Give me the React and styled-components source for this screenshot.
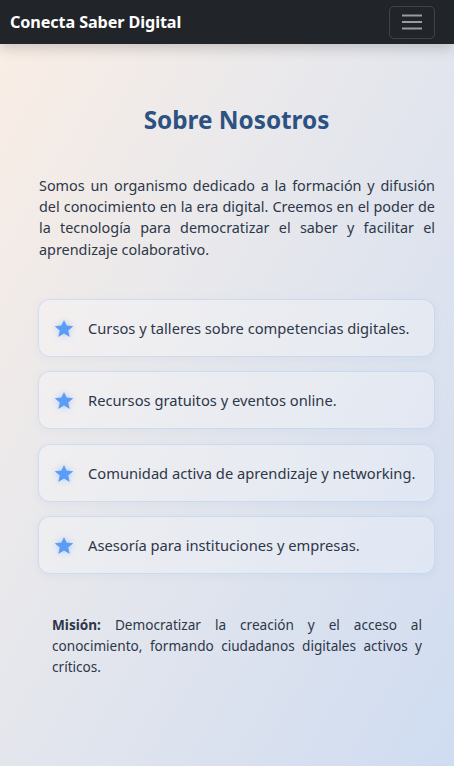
import React from "react";
import styled, { createGlobalStyle } from "styled-components";

const Global = createGlobalStyle`
  html, body {
    margin: 0;
    padding: 0;
  }
  body {
    font-family: "Noto Sans", "Open Sans", sans-serif;
    background: linear-gradient(120deg, #fbeee4 0%, #e8e8ec 40%, #cfdcf1 100%);
    min-height: 766px;
  }
`;

const Page = styled.div`
  min-height: 766px;
  display: flex;
  flex-direction: column;
`;

const Navbar = styled.nav`
  height: 44px;
  background: #212529;
  display: flex;
  align-items: center;
  justify-content: space-between;
  padding: 0 19px 0 10px;
  box-shadow: 0 4px 14px rgba(0, 0, 0, 0.18);
  position: relative;
  z-index: 2;
`;

const Brand = styled.span`
  color: #fff;
  font-weight: 700;
  font-size: 16.2px;
  letter-spacing: -0.1px;
`;

const Toggler = styled.button`
  width: 46px;
  height: 33px;
  border: 1px solid rgba(255, 255, 255, 0.14);
  border-radius: 5px;
  background: transparent;
  display: flex;
  align-items: center;
  justify-content: center;
  padding: 0;
`;

const Main = styled.main`
  padding: 62px 19px 40px 38px;
  display: flex;
  flex-direction: column;
`;

const Title = styled.h2`
  margin: 0;
  text-align: center;
  color: #2c5282;
  font-size: 24.3px;
  font-weight: 700;
  line-height: 28px;
`;

const Intro = styled.p`
  margin: 41px 0 0 1px;
  font-size: 14.4px;
  line-height: 21.2px;
  color: #2d3748;
  text-align: justify;
`;

const List = styled.ul`
  list-style: none;
  margin: 39px 0 0;
  padding: 0;
  display: flex;
  flex-direction: column;
  gap: 14.5px;
`;

const Item = styled.li`
  height: 56px;
  border: 1px solid rgba(147, 187, 245, 0.35);
  border-radius: 12px;
  background: rgba(255, 255, 255, 0.25);
  box-shadow: 0 2px 8px rgba(120, 140, 180, 0.08);
  display: flex;
  align-items: center;
  gap: 12px;
  padding: 0 13px;
  font-size: 14.7px;
  color: #2d3748;
`;

const Mission = styled.p`
  margin: 40px 13px 0 14px;
  font-size: 13.6px;
  line-height: 21px;
  color: #2d3748;
  text-align: justify;
  b {
    font-weight: 700;
  }
`;

const Star = () => (
  <svg width="24" height="22" viewBox="0 0 24 22" style={{ filter: "drop-shadow(0 0 3px rgba(96,165,250,0.45))", flexShrink: 0 }}>
    <path
      d="M12 3l2.6 5.6 6.7.6-5.1 4.3 1.6 6.5L12 16.6 6.2 20l1.6-6.5-5.1-4.3 6.7-.6z"
      fill="#5b9cf7"
    />
  </svg>
);

const Burger = () => (
  <svg width="24" height="18" viewBox="0 0 24 18">
    <g stroke="rgba(255,255,255,0.55)" strokeWidth="2">
      <line x1="2" y1="2.5" x2="22" y2="2.5" />
      <line x1="2" y1="9" x2="22" y2="9" />
      <line x1="2" y1="15.5" x2="22" y2="15.5" />
    </g>
  </svg>
);

const items = [
  "Cursos y talleres sobre competencias digitales.",
  "Recursos gratuitos y eventos online.",
  "Comunidad activa de aprendizaje y networking.",
  "Asesoría para instituciones y empresas.",
];

export default function App() {
  return (
    <Page>
      <Global />
      <Navbar>
        <Brand>Conecta Saber Digital</Brand>
        <Toggler aria-label="menu">
          <Burger />
        </Toggler>
      </Navbar>
      <Main>
        <Title>Sobre Nosotros</Title>
        <Intro>
          Somos un organismo dedicado a la formación y difusión del conocimiento en la era digital. Creemos en el poder de la tecnología para democratizar el saber y facilitar el aprendizaje colaborativo.
        </Intro>
        <List>
          {items.map((t) => (
            <Item key={t}>
              <Star />
              <span>{t}</span>
            </Item>
          ))}
        </List>
        <Mission>
          <b>Misión:</b> Democratizar la creación y el acceso al conocimiento, formando ciudadanos digitales activos y críticos.
        </Mission>
      </Main>
    </Page>
  );
}
